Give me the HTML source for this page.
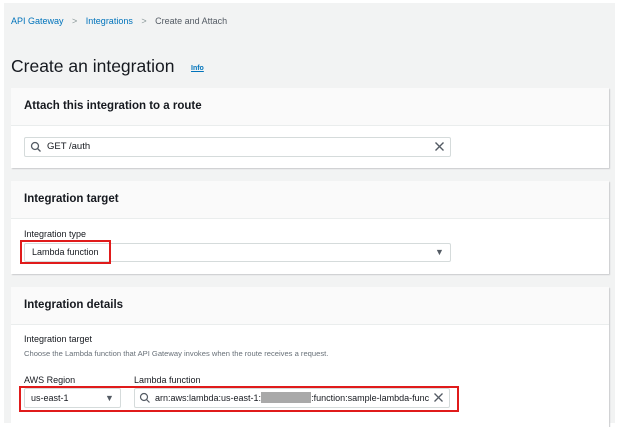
<!DOCTYPE html><html><head><style>
body{margin:0;width:626px;height:421px;background:#fff;font-family:"Liberation Sans",sans-serif;position:relative;overflow:hidden}
.bg{position:absolute;left:4px;top:3px;width:611px;height:420px;background:#f2f3f3}
.a{position:absolute;white-space:nowrap}
.p{position:absolute;left:11px;width:598px;background:#fff;box-shadow:1px 1px 1px #c9cbcc}
.h{height:37px;background:#fafafa;border-bottom:1px solid #eaeded;font-weight:bold;font-size:11.5px;color:#16191f;line-height:37px;padding-left:13px}
.in{position:absolute;background:#fff;border:1px solid #d5dbdb;border-radius:2px;font-size:9.5px;color:#16191f;box-sizing:border-box;overflow:hidden;white-space:nowrap}
.red{position:absolute;border:2px solid #e01b1b;box-sizing:border-box}
</style></head><body>
<div class="bg"></div>
<div class="a" style="left:11px;top:16px;font-size:9px;color:#0073bb">API Gateway <span style="color:#879596;margin:0 6px">&gt;</span> Integrations <span style="color:#879596;margin:0 6px">&gt;</span> <span style="color:#545b64">Create and Attach</span></div>
<div class="a" style="left:11px;top:56px;font-size:17.5px;color:#16191f">Create an integration</div>
<div class="a" style="left:191px;top:65px;font-size:7px;font-weight:bold;color:#0073bb;text-decoration:underline">Info</div>
<div class="p" style="top:88px;height:80px"><div class="h">Attach this integration to a route</div></div>
<div class="in" style="left:24px;top:137px;width:427px;height:20px;line-height:18px;padding-left:22px">GET /auth</div>
<svg class="a" style="left:30px;top:141px" width="12" height="12"><circle cx="5" cy="5" r="3.5" fill="none" stroke="#545b64" stroke-width="1.3"/><path d="M7.5 7.5L10.5 10.5" stroke="#545b64" stroke-width="1.3"/></svg>
<svg class="a" style="left:434px;top:141px" width="12" height="12"><path d="M1.5 1.5L9.5 9.5M9.5 1.5L1.5 9.5" stroke="#545b64" stroke-width="1.4"/></svg>
<div class="p" style="top:181px;height:93px"><div class="h">Integration target</div></div>
<div class="a" style="left:24px;top:229px;font-size:9px;color:#16191f">Integration type</div>
<div class="in" style="left:24px;top:243px;width:427px;height:19px;line-height:17px;padding-left:7px;font-size:9px">Lambda function</div>
<div class="a" style="left:435px;top:247px;font-size:9px;color:#545b64">▼</div>
<div class="red" style="left:20px;top:240px;width:91px;height:24px"></div>
<div class="p" style="top:287px;height:140px"><div class="h">Integration details</div></div>
<div class="a" style="left:24px;top:334px;font-size:9px;color:#16191f">Integration target</div>
<div class="a" style="left:24px;top:349px;font-size:7.6px;color:#687078">Choose the Lambda function that API Gateway invokes when the route receives a request.</div>
<div class="a" style="left:24px;top:375px;font-size:9px;color:#16191f">AWS Region</div>
<div class="a" style="left:134px;top:375px;font-size:9px;color:#16191f">Lambda function</div>
<div class="in" style="left:24px;top:388px;width:97px;height:20px;line-height:18px;padding-left:6px;font-size:9px">us-east-1</div>
<div class="a" style="left:105px;top:393px;font-size:9px;color:#545b64">▼</div>
<div class="in" style="left:134px;top:388px;width:316px;height:20px;line-height:18px;padding-left:20px;font-size:9px"><span style="display:inline-block;width:274px;overflow:hidden;vertical-align:top">arn:aws:lambda:us-east-1:<span style="display:inline-block;width:50px;height:11px;background:#a9a9a9;vertical-align:-2px"></span>:function:sample-lambda-function</span></div>
<svg class="a" style="left:139px;top:392px" width="12" height="12"><circle cx="5" cy="5" r="3.5" fill="none" stroke="#545b64" stroke-width="1.2"/><path d="M7.5 7.5L10.5 10.5" stroke="#545b64" stroke-width="1.2"/></svg>
<svg class="a" style="left:433px;top:392px" width="12" height="12"><path d="M1.5 1.5L9.5 9.5M9.5 1.5L1.5 9.5" stroke="#545b64" stroke-width="1.3"/></svg>
<div class="red" style="left:19px;top:386px;width:440px;height:26px"></div>
</body></html>
